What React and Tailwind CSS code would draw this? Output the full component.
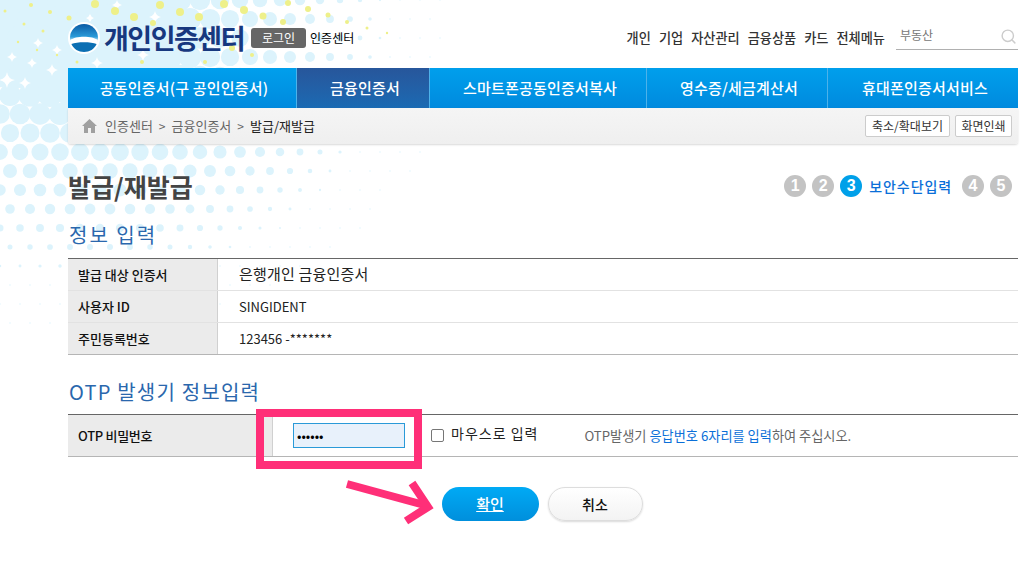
import { Search } from 'lucide-react';

const font = { fontFamily: '"Noto Sans CJK KR", "Liberation Sans", sans-serif' };

const topLinks = ['개인', '기업', '자산관리', '금융상품', '카드', '전체메뉴'];

const navItems = [
  { label: '공동인증서(구 공인인증서)', width: 'w-[229px]' },
  { label: '금융인증서', width: 'w-[133px]', active: true },
  { label: '스마트폰공동인증서복사', width: 'w-[217px]' },
  { label: '영수증/세금계산서', width: 'w-[181px]' },
  { label: '휴대폰인증서서비스', width: 'flex-1' },
];

const infoRows = [
  { label: '발급 대상 인증서', value: '은행개인 금융인증서', size: 'text-[15px] tracking-[0.2px]' },
  { label: '사용자 ID', value: 'SINGIDENT', size: 'text-[13px]' },
  { label: '주민등록번호', value: '123456 -*******', size: 'text-[13px]' },
];

const yellowDots = [
  [95, 4, 4], [115, 11, 4], [134, 17, 4], [153, 23, 3], [160, 5, 4], [180, 12, 4], [199, 17, 4], [224, 4, 4],
  [244, 10, 4], [263, 16, 3.5], [283, 22, 3], [308, 9, 3], [328, 15, 2.5], [288, 3, 3], [50, 12, 2], [69, 18, 2.5],
  [31, 5, 2], [5, 11, 1.5], [43, 31, 1.5], [24, 24, 1.5], [18, 42, 1.2], [37, 50, 1.2], [57, 55, 1.2], [77, 62, 1.5],
  [142, 62, 2], [205, 62, 2], [232, 48, 3], [252, 55, 2], [347, 22, 2], [367, 28, 1.5], [387, 33, 1.2],
];

const stars = [
  [7, 80, 8], [25, 83, 6], [52, 70, 6], [32, 63, 5], [12, 57, 5], [57, 50, 5], [38, 43, 5],
  [97, 63, 6], [143, 55, 6], [155, 17, 6], [117, 5, 5], [90, 18, 4],
];

// blue dots shrinking away from the top left
function blueDots() {
  const out = [];
  for (let row = 0; row < 18; row++) {
    const y = row * 19;
    for (let x = row % 2 ? 10 : 0; x < 460; x += 20) {
      const dx = x < 100 ? (x - 100) / 1.55 : (x - 100) / 1.2;
      const d = Math.hypot(dx, y - 40);
      if (d > 290) continue;
      out.push({ x, y, r: Math.max(0.7, 16 * (1 - d / 255)) });
    }
  }
  return out;
}

function Backdrop() {
  return (
    <svg className="absolute left-0 top-0" width="460" height="340">
      <ellipse cx="60" cy="20" rx="125" ry="72" fill="#dcf3fc" />
      {blueDots().map((d, i) => (
        <circle key={i} cx={d.x} cy={d.y} r={d.r} fill="#dcf3fc" />
      ))}
      {stars.map(([x, y, s], i) => (
        <path
          key={i}
          d={`M${x} ${y - s}Q${x + 1} ${y - 1} ${x + s} ${y}Q${x + 1} ${y + 1} ${x} ${y + s}Q${x - 1} ${y + 1} ${x - s} ${y}Q${x - 1} ${y - 1} ${x} ${y - s}Z`}
          fill="#fff"
        />
      ))}
      {yellowDots.map(([x, y, r], i) => (
        <circle key={i} cx={x} cy={y} r={r} fill="#eef08a" />
      ))}
    </svg>
  );
}

function Logo() {
  return (
    <svg width="32" height="32" viewBox="0 0 32 32">
      <defs>
        <linearGradient id="dome" x1="0" y1="0" x2="0" y2="1">
          <stop offset="0" stopColor="#0a5aa4" />
          <stop offset="0.45" stopColor="#2a9ad8" />
          <stop offset="0.6" stopColor="#bfe6f8" />
          <stop offset="0.66" stopColor="#ffffff" />
        </linearGradient>
      </defs>
      <circle cx="16" cy="16" r="16" fill="#fff" />
      <circle cx="16" cy="16" r="14" fill="url(#dome)" />
      <path d="M2.200 18C8 13.500 24 13.500 29.800 18C30 25 24 30 16 30C8 30 2 25 2.200 18Z" fill="#fff" />
      <path d="M3.400 22C9 19.500 23 19.500 28.600 22C26.500 27 21.500 30 16 30C10.500 30 5.500 27 3.400 22Z" fill="#0b6fb3" />
    </svg>
  );
}

function Step({ n, active }) {
  return (
    <span
      className={`flex h-[22px] w-[22px] items-center justify-center rounded-full text-[16px] font-bold text-white ${
        active ? 'bg-[#00a0e9]' : 'bg-[#c3c3c3]'
      }`}
      style={{ fontFamily: '"Liberation Sans", sans-serif' }}
    >
      {n}
    </span>
  );
}

export default function App() {
  return (
    <div className="relative h-[580px] w-[1024px] overflow-hidden bg-white" style={font}>
      <Backdrop />

      <div className="relative ml-[68px] w-[950px]">
        <header className="flex h-[68px] items-center justify-between pt-[7px]">
          <div className="flex items-center">
            <Logo />
            <span className="ml-[4px] text-[27px] font-bold leading-none tracking-[-1.5px] text-[#17387f]">개인인증센터</span>
            <span className="ml-[7px] flex h-[20px] w-[55px] items-center justify-center rounded-[3px] bg-[#666] text-[12px] text-white">로그인</span>
            <span className="ml-[4px] text-[12px] text-black">인증센터</span>
          </div>
          <div className="flex items-center">
            <nav className="flex gap-[8px] text-[13.2px] font-medium text-[#333]">
              {topLinks.map((t) => (
                <span key={t}>{t}</span>
              ))}
            </nav>
            <div className="ml-[11px] flex h-[24px] w-[122px] items-center justify-between border-b border-[#b0b0b0] pb-[4px] pl-[4px] text-[12px] text-[#777]">
              <span>부동산</span>
              <Search className="mr-[1px] mt-[3px] h-[17px] w-[17px] text-[#ccc]" />
            </div>
          </div>
        </header>

        <nav className="flex h-[40px] bg-gradient-to-b from-[#009fec] to-[#008ade]">
          {navItems.map((item) => (
            <div
              key={item.label}
              className={`flex items-center justify-center border-r border-[#4db2ea] pl-[4px] text-[15px] font-medium tracking-[0.2px] text-white last:border-r-0 ${item.width} ${
                item.active ? 'bg-gradient-to-b from-[#27569b] to-[#1a6ab3]' : ''
              }`}
            >
              {item.label}
            </div>
          ))}
        </nav>

        <div className="flex h-[36px] items-center justify-between rounded-b-[3px] bg-gradient-to-b from-[#f5f5f5] to-[#efefef] pl-[14px] pr-[6px] shadow-[0_1px_2px_rgba(0,0,0,0.15)]">
          <div className="flex items-center text-[13px] text-[#666]">
            <svg width="15" height="14" viewBox="0 0 15 14" className="mr-[8px]" fill="#a0a0a0">
              <path d="M7.500 0L15 7H13V14H9V9H6V14H2V7H0Z" />
            </svg>
            <span>인증센터</span>
            <span className="mx-[6px] text-[12px]">&gt;</span>
            <span>금융인증서</span>
            <span className="mx-[6px] text-[12px]">&gt;</span>
            <span className="text-[#222]">발급/재발급</span>
          </div>
          <div className="flex gap-[5px] text-[12px] text-[#333]">
            <span className="flex h-[22px] w-[85px] items-center justify-center rounded-[2px] border border-[#ccc] bg-white">축소/확대보기</span>
            <span className="flex h-[22px] w-[57px] items-center justify-center rounded-[2px] border border-[#ccc] bg-white">화면인쇄</span>
          </div>
        </div>

        <div className="mt-[26px] flex items-center justify-between pr-[6px]">
          <h1 className="text-[25px] font-bold leading-[32px] text-[#444]">발급/재발급</h1>
          <div className="flex items-center gap-[6px]">
            <Step n="1" />
            <Step n="2" />
            <Step n="3" active />
            <span className="ml-[1px] mr-[4px] text-[14px] font-medium tracking-[0.9px] text-[#0a6fd8]">보안수단입력</span>
            <Step n="4" />
            <Step n="5" />
          </div>
        </div>

        <h2 className="mt-[20px] pl-[1px] text-[20px] leading-[26px] tracking-[2px] text-[#2a67ad]">정보 입력</h2>

        <div className="mt-[10px] border-b border-t border-b-[#b5b5b5] border-t-[#666]">
          {infoRows.map((row) => (
            <div key={row.label} className="flex h-[32px] border-b border-[#e2e2e2] last:h-[31px] last:border-b-0">
              <div className="flex w-[150px] shrink-0 items-center border-r border-[#d0d0d0] bg-[#ebebeb] pl-[10px] text-[13px] font-medium text-[#111]">
                {row.label}
              </div>
              <div className={`flex items-center pl-[21px] text-[#222] ${row.size}`}>{row.value}</div>
            </div>
          ))}
        </div>

        <h2 className="mt-[24px] pl-[1px] text-[20px] leading-[26px] tracking-[1.2px] text-[#2a67ad]">OTP 발생기 정보입력</h2>

        <div className="mt-[9px] flex h-[43px] border-b border-t border-b-[#b5b5b5] border-t-[#666]">
          <div className="flex w-[205px] shrink-0 items-center border-r border-[#d0d0d0] bg-[#ebebeb] pl-[10px] text-[13px] font-medium tracking-[-0.3px] text-[#111]">OTP 비밀번호</div>
          <div className="ml-[20px] flex items-center">
            <input
              readOnly
              type="password"
              value="123456"
              className="h-[25px] w-[112px] border border-[#2a9ad8] bg-[#e8f1fb] pl-[3px] text-[13px] outline-none"
            />
          </div>
          <label className="ml-[26px] flex items-center text-[14px] tracking-[1px] text-[#222]">
            <span className="mr-[7px] h-[13px] w-[13px] rounded-[2px] border border-[#767676] bg-white" />
            <span className="-mt-[4px]">마우스로 입력</span>
          </label>
          <p className="ml-[46px] flex items-center text-[13.2px] text-[#666]">
            OTP발생기&nbsp;<span className="text-[#0a6fd8]">응답번호 6자리를 입력</span>하여 주십시오.
          </p>
        </div>

        <div className="mt-[30px] flex justify-center gap-[9px] pr-[2px]">
          <button className="h-[34px] w-[97px] rounded-full bg-gradient-to-b from-[#00aaf5] to-[#008fdc] text-[15px] font-medium text-white underline">확인</button>
          <button className="h-[34px] w-[95px] rounded-full border border-[#ddd] bg-gradient-to-b from-white to-[#f3f3f3] text-[14px] font-medium text-[#111] shadow-[0_1px_2px_rgba(0,0,0,0.15)]">취소</button>
        </div>
      </div>

      {/* annotation drawn over the page */}
      <div className="absolute left-[256px] top-[409px] h-[60px] w-[166px] border-[8px] border-[#ff2f78]" />
      <svg className="absolute left-[340px] top-[475px]" width="100" height="50" fill="none" stroke="#ff2f78" strokeWidth="8">
        <path d="M7 9L88 31" />
        <path d="M72 8L88 32L66 46" />
      </svg>
    </div>
  );
}
